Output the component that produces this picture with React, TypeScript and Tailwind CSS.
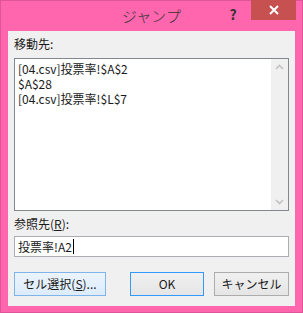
import React from 'react';

const font = { fontFamily: '"Noto Sans CJK JP", "Noto Sans", sans-serif' };

const Chevron: React.FC<{ down?: boolean }> = ({ down }) => (
  <svg width="9" height="6" viewBox="0 0 9 6" className="block">
    <path
      d={down ? 'M1 1 L4.5 4.5 L8 1' : 'M1 5 L4.5 1.5 L8 5'}
      fill="none"
      stroke="#c2c2c2"
      strokeWidth="1.6"
    />
  </svg>
);

const App: React.FC = () => {
  const refs = ['[04.csv]投票率!$A$2', '$A$28', '[04.csv]投票率!$L$7'];

  return (
    <div
      className="w-[303px] h-[313px] bg-[#ff66ad] border border-[#e0559a] flex flex-col text-[12px] text-[#1a1a1a]"
      style={font}
    >
      {/* title bar */}
      <div className="h-[30px] flex items-start relative">
        <div className="absolute left-0 right-0 top-[5px] text-center text-[15px] leading-[20px] font-light text-[#333]">
          ジャンプ
        </div>
        <div className="ml-auto flex items-start">
          <div className="w-[14px] mr-[11px] mt-[5px] text-center text-[14px] font-bold leading-[16px] text-[#333]">
            ?
          </div>
          <div className="w-[45px] h-[20px] mt-[-1px] mr-[6px] bg-[#c75050] flex items-center justify-center">
            <svg width="10" height="10" viewBox="0 0 10 10">
              <path d="M1 1 L9 9 M9 1 L1 9" stroke="#fff" strokeWidth="2" />
            </svg>
          </div>
        </div>
      </div>

      {/* client area */}
      <div className="mx-[7px] h-[275px] bg-[#f0f0f0] px-[6px] flex flex-col">
        <div className="pt-[5px] leading-[16px]">移動先:</div>
        <div className="mt-[6px] h-[153px] border border-[#828790] bg-white flex">
          <div className="flex-1 pl-[3px] pt-[2px] leading-[15px]">
            {refs.map((r) => (
              <div key={r}>{r}</div>
            ))}
          </div>
          <div className="w-[17px] bg-[#f0f0f0] flex flex-col items-center justify-between py-[5px]">
            <Chevron />
            <Chevron down />
          </div>
        </div>

        <div className="mt-[5px] leading-[16px]">
          参照先(<span className="underline">R</span>):
        </div>
        <div className="mt-[4px] h-[21px] border border-[#abadb3] bg-white flex items-center pl-[3px] leading-[16px]">
          <span>投票率!A2</span>
          <span className="w-px h-[15px] bg-black ml-[1px]" />
        </div>

        <div className="mt-[15px] flex items-start">
          <button className="w-[92px] h-[24px] border border-[#7eb4ea] bg-gradient-to-b from-[#ecf4fc] to-[#dcecfc] leading-[16px]">
            セル選択(<span className="underline">S</span>)...
          </button>
          <button className="ml-auto w-[74px] h-[24px] border border-[#3399ff] bg-gradient-to-b from-[#f0f0f0] to-[#e5e5e5] leading-[16px]">
            OK
          </button>
          <button className="ml-[10px] w-[75px] h-[24px] border border-[#acacac] bg-gradient-to-b from-[#f0f0f0] to-[#e5e5e5] leading-[16px]">
            キャンセル
          </button>
        </div>
      </div>
    </div>
  );
};

export default App;
